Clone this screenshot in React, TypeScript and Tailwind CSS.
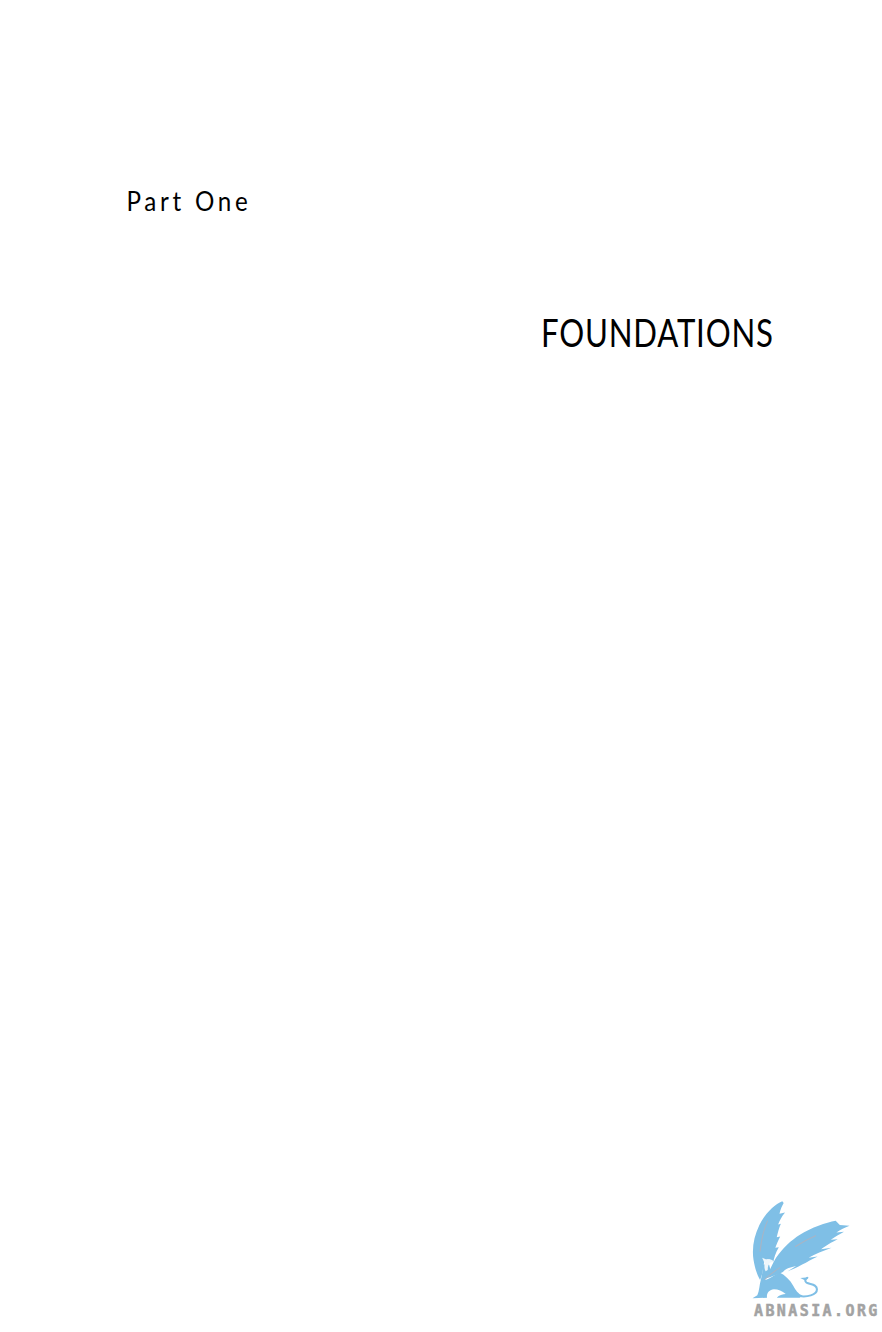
export default function App() {
  return (
    <div className="flex h-[1332px] w-[882px] flex-col overflow-hidden bg-white font-['Lato',sans-serif] text-black">
      {/* Part heading */}
      <p className="mt-[184px] origin-left scale-x-[0.93] pl-[136px] text-[26px] leading-[34px] tracking-[4px]">Part One</p>

      {/* Title */}
      <h1 className="mt-[91px] origin-right scale-x-[0.82] pr-[132px] text-right text-[38px] font-normal leading-[46px] tracking-[1px]">
        FOUNDATIONS
      </h1>

      {/* Watermark logo */}
      <div className="mt-auto flex flex-col items-end pb-[12px] pr-[1px]">
        <div className="w-[127px]">
          <svg viewBox="60 50 300 320" preserveAspectRatio="none" className="ml-[-5px] block h-[107px] w-[104px]">
            <g fill="#7fbfe6">
              {/* left wing */}
              <path d="M156 63 C134 72 106 100 90 134 C74 168 68 204 73 238 C77 264 84 284 92 298 C99 282 101 262 104 242 C112 232 124 236 130 246 C132 232 136 218 146 200 L136 202 C140 190 144 180 150 168 L140 170 C144 154 146 144 152 130 L144 132 C148 122 154 108 164 96 L148 100 C150 88 156 76 160 68 Z" />
              {/* right wing */}
              <path d="M350 136 L322 134 L310 121 C282 126 240 142 208 162 C180 180 156 204 138 232 C128 250 118 272 108 294 C124 288 142 282 158 274 C164 266 170 262 196 256 L172 272 C200 262 226 244 258 228 L232 232 C252 220 272 212 298 202 L268 206 C284 194 296 186 316 176 L296 178 C310 168 320 162 334 154 L312 156 C324 148 336 142 350 136 Z" />
              {/* body */}
              <path d="M100 252 L118 252 L122 268 C118 280 112 290 106 298 C120 296 134 282 148 276 C164 284 178 298 188 316 C194 328 202 340 214 344 L206 351 L140 351 C146 344 158 340 166 340 C156 332 144 326 132 326 C118 328 110 338 112 351 L70 353 L84 344 C90 330 90 312 94 298 C98 284 100 268 100 252 Z" />
            </g>
            {/* tail */}
            <path d="M204 346 C226 350 256 344 256 326 C256 310 236 312 226 306 C220 302 222 296 228 292" fill="none" stroke="#7fbfe6" strokeWidth="6" strokeLinecap="round" />
            <path d="M208 292 L232 290 L222 300 Z" fill="#7fbfe6" />
            {/* head */}
            <path d="M98 232 L112 238 C120 234 128 238 132 244 L122 246 C116 250 114 258 114 268 L108 272 C104 266 104 256 105 248 Z" fill="#eef6fb" />
            {/* feather shafts */}
            <g fill="none" stroke="#a9b4c4" strokeWidth="3" strokeLinecap="round">
              <path d="M113 122 C102 148 96 176 92 212" />
              <path d="M252 166 C230 176 212 186 194 198" />
              <path d="M148 262 C130 274 118 284 106 296" />
            </g>
          </svg>
          <p className="mt-[-2px] whitespace-nowrap font-['DejaVu_Sans_Mono',monospace] text-[15px] font-bold leading-[18px] tracking-[2.4px] text-[#a3a3a3] [-webkit-text-stroke:0.5px_#a3a3a3]">
            ABNASIA.ORG
          </p>
        </div>
      </div>
    </div>
  );
}
